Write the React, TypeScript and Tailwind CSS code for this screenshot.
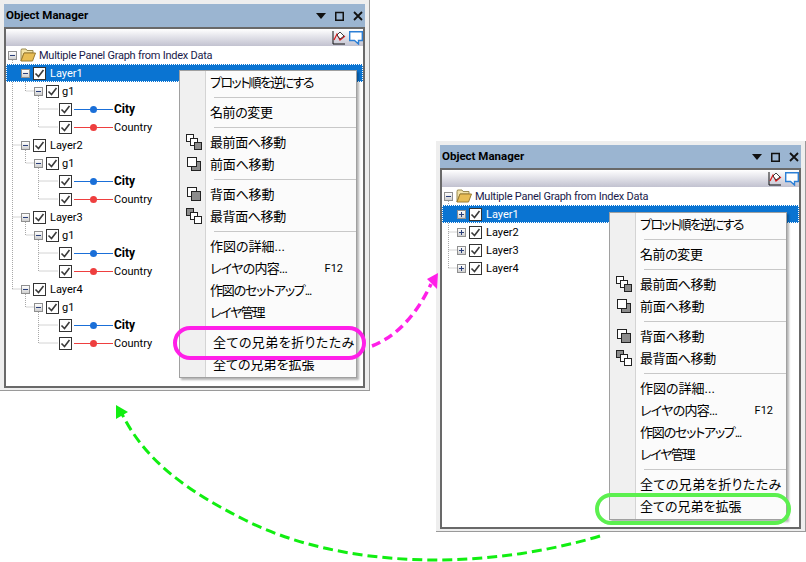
const UI_FONT = "font-['Roboto','Noto_Sans_CJK_JP',sans-serif]"

type MenuRow =
  | { sep: true }
  | { label: string; icon?: number; key?: string; nudge?: boolean; track?: string }

const menuRows = (nudge: boolean): MenuRow[] => [
  { label: "プロット順を逆にする", track: "tracking-[-1.6px]" },
  { sep: true },
  { label: "名前の変更", track: "tracking-[-0.4px]" },
  { sep: true },
  { label: "最前面へ移動", icon: 0, track: "tracking-[-0.4px]" },
  { label: "前面へ移動", icon: 1, track: "tracking-[-0.2px]" },
  { sep: true },
  { label: "背面へ移動", icon: 2, track: "tracking-[-0.2px]" },
  { label: "最背面へ移動", icon: 3, track: "tracking-[-0.4px]" },
  { sep: true },
  { label: "作図の詳細..." },
  { label: "レイヤの内容...", key: "F12", track: "tracking-[-0.7px]" },
  { label: "作図のセットアップ...", track: "tracking-[-1.2px]" },
  { label: "レイヤ管理", track: "tracking-[-1.3px]" },
  { sep: true },
  { label: "全ての兄弟を折りたたみ", nudge, track: "tracking-[0.45px]" },
  { label: "全ての兄弟を拡張", nudge },
]

function StackIcon({ kind }: { kind: number }) {
  if (kind === 0 || kind === 3) {
    return (
      <svg width="16" height="16" viewBox="0 0 16 16">
        <rect x="0.5" y="0.5" width="7" height="7" fill={kind === 3 ? "#8c8c8c" : "#fff"} stroke="#222" />
        <rect x="4.5" y="4.5" width="7" height="7" fill="#fff" stroke="#222" />
        <rect x="8.5" y="8.5" width="7" height="7" fill={kind === 0 ? "#8c8c8c" : "#fff"} stroke="#222" />
      </svg>
    )
  }
  return (
    <svg width="16" height="16" viewBox="0 0 16 16">
      {kind === 1 ? (
        <>
          <rect x="5.5" y="5.5" width="9" height="9" fill="#8c8c8c" stroke="#222" />
          <rect x="1.5" y="1.5" width="9" height="9" fill="#fff" stroke="#222" />
        </>
      ) : (
        <>
          <rect x="1.5" y="1.5" width="9" height="9" fill="#fff" stroke="#222" />
          <rect x="5.5" y="5.5" width="9" height="9" fill="#8c8c8c" stroke="#222" />
        </>
      )}
    </svg>
  )
}

function ContextMenu({ className, nudge }: { className: string; nudge: boolean }) {
  return (
    <div className={`absolute w-[178px] h-[308px] bg-[#fbfbfb] border border-[#a0a0a0] shadow-[2px_2px_2px_rgba(0,0,0,0.3)] ${className}`}>
      <div className="absolute left-0 top-0 bottom-0 w-[26px] bg-[#f0f0f0] border-r border-[#d4d4d4]" />
      <div className="relative flex flex-col text-[13px] leading-none text-black [font-feature-settings:'palt']">
        {menuRows(nudge).map((r, i) =>
          "sep" in r ? (
            <div key={i} className="h-[8px] flex items-center pl-[34px]">
              <div className="h-px w-full bg-[#c8c8c8]" />
            </div>
          ) : (
            <div key={i} className="h-[22px] flex items-center">
              <div className="w-[26px] flex justify-center pl-[1px] shrink-0">
                {r.icon !== undefined && <StackIcon kind={r.icon} />}
              </div>
              <span className={`whitespace-nowrap ${r.nudge ? "pl-[7px]" : "pl-[4px]"} ${r.track ?? ""}`}>{r.label}</span>
              {r.key && <span className="ml-auto pr-[13px] text-[11px]">{r.key}</span>}
            </div>
          )
        )}
      </div>
    </div>
  )
}

function ExpandBox({ plus }: { plus?: boolean }) {
  return (
    <span className="relative w-[7px] h-[7px] shrink-0 border border-[#8f8f8f] bg-gradient-to-b from-white to-[#d0d0d0] box-content flex items-center justify-center">
      <span className="absolute w-[5px] h-px bg-[#2a3f7a]" />
      {plus && <span className="absolute w-px h-[5px] bg-[#2a3f7a]" />}
    </span>
  )
}

function Check() {
  return (
    <span className="w-[11px] h-[11px] shrink-0 box-content border border-[#333] bg-white flex items-center justify-center">
      <svg width="11" height="11" viewBox="0 0 11 11">
        <path d="M1.5 5.5 L4.5 8.5 L9.5 2" fill="none" stroke="#3a3a3a" strokeWidth="1.6" />
      </svg>
    </span>
  )
}

function Folder() {
  return (
    <svg width="16" height="14" viewBox="0 0 16 14" className="shrink-0">
      <path d="M1 2.5 L1.5 1 H6 L7 2.5 H13 V5 H4 L1 13 Z" fill="#f3e3a8" stroke="#9a8a50" />
      <path d="M1 13 L4 5 H15.5 L12.5 13 Z" fill="#e8bd55" stroke="#9a7a30" />
    </svg>
  )
}

function Series({ color, label, bold }: { color: string; label: string; bold?: boolean }) {
  return (
    <div className="h-[18px] flex items-center pl-[53px]">
      <Check />
      <span className="relative w-[39px] h-px ml-[2px] shrink-0 flex items-center justify-center" style={{ background: color }}>
        <span className="w-[7px] h-[7px] rounded-full shrink-0" style={{ background: color }} />
      </span>
      <span className={`ml-[1px] ${bold ? "font-bold text-[12px]" : "text-[11px]"}`}>{label}</span>
    </div>
  )
}

function LayerRow({ name, plus, selected }: { name: string; plus?: boolean; selected?: boolean }) {
  return (
    <div className={`h-[18px] flex items-center pl-[15px] ${selected ? "bg-[#0a74d2] text-white outline-1 outline-dotted outline-white -outline-offset-1" : ""}`}>
      <ExpandBox plus={plus} />
      <span className="ml-[3px]"><Check /></span>
      <span className="ml-[4px] text-[11px]">{name}</span>
    </div>
  )
}

function Group() {
  return (
    <>
      <div className="h-[18px] flex items-center pl-[28px]">
        <ExpandBox />
        <span className="ml-[3px]"><Check /></span>
        <span className="ml-[3px] text-[11px]">g1</span>
      </div>
      <Series color="#1a6fd8" label="City" bold />
      <Series color="#ee3f3f" label="Country" />
    </>
  )
}

function TreeLines({ expanded }: { expanded: boolean }) {
  const rows = (n: number) => 9 + 18 * n
  let d = ""
  if (expanded) {
    d += `M6.5 14V${rows(13)}`
    for (const l of [1, 5, 9, 13]) {
      d += `M6.5 ${rows(l)}H15M19.5 ${rows(l) + 5}V${rows(l + 1)}H28`
      d += `M32.5 ${rows(l + 1) + 5}V${rows(l + 3)}H52M32.5 ${rows(l + 2)}H52`
    }
  } else {
    d += `M6.5 14V${rows(4)}`
    for (const l of [1, 2, 3, 4]) d += `M6.5 ${rows(l)}H15`
  }
  return (
    <svg className="absolute left-0 top-0 pointer-events-none" width="80" height="340">
      <path d={d} fill="none" stroke="#a8a8a8" strokeDasharray="1 1" />
    </svg>
  )
}

function ToolIcons() {
  return (
    <div className="ml-auto flex items-center gap-[3px]">
      <svg width="14" height="14" viewBox="0 0 14 14">
        <path d="M1 0V13H13" fill="none" stroke="#111" />
        <path d="M2 9 L5 3 L8 9 L13 5" fill="none" stroke="#e01818" strokeWidth="1.2" />
        <path d="M5 4 L8 1 L12 5 L8 8 Z" fill="#fff" stroke="#111" strokeWidth="0.8" />
      </svg>
      <svg width="14" height="14" viewBox="0 0 14 14">
        <path d="M0.7 0.7H13.3V9.5H9.5V13L5.5 9.5H0.7Z" fill="#fff" stroke="#2b7fd6" strokeWidth="1.4" />
      </svg>
    </div>
  )
}

function ManagerWindow({ className, expanded, menuClass, nudge }: { className: string; expanded: boolean; menuClass: string; nudge: boolean }) {
  return (
    <div className={`absolute w-[370px] bg-[#eeeeee] border-r border-b border-[#9a9a9a] pt-[4px] px-[4px] pb-[2px] flex flex-col ${className}`}>
      <div className="h-[23px] bg-[#9bb5d1] flex items-center pl-[2px] pr-[2px] shrink-0">
        <span className="text-[11.5px] font-bold text-black pt-[1px]">Object Manager</span>
        <div className="ml-auto flex items-center gap-[9px]">
          <svg width="10" height="6" viewBox="0 0 10 6"><path d="M0 0H10L5 6Z" fill="#111" /></svg>
          <svg width="9" height="10" viewBox="0 0 9 10"><path d="M0.75 1.5H8.25V9.25H0.75Z" fill="none" stroke="#111" strokeWidth="1.5" /></svg>
          <svg width="10" height="10" viewBox="0 0 10 10"><path d="M1 1L9 9M9 1L1 9" stroke="#111" strokeWidth="1.8" /></svg>
        </div>
      </div>
      <div className="flex-1 border-2 border-[#696969] flex flex-col">
        <div className="h-[17px] bg-gradient-to-b from-white to-[#c2c2d0] flex items-center shrink-0">
          <ToolIcons />
        </div>
        <div className={`relative bg-white h-[340px] text-[12px] leading-none text-black ${UI_FONT}`}>
          <TreeLines expanded={expanded} />
          <div className="relative flex flex-col">
            <div className="h-[18px] flex items-center pl-[2px]">
              <ExpandBox />
              <span className="ml-[3px]"><Folder /></span>
              <span className="ml-[3px] whitespace-nowrap text-[11px] tracking-[-0.25px] text-[#1a1a4a]">Multiple Panel Graph from Index Data</span>
            </div>
            {expanded ? (
              ["Layer1", "Layer2", "Layer3", "Layer4"].map((n, i) => (
                <div key={n}>
                  <LayerRow name={n} selected={i === 0} />
                  <Group />
                </div>
              ))
            ) : (
              ["Layer1", "Layer2", "Layer3", "Layer4"].map((n, i) => (
                <LayerRow key={n} name={n} plus selected={i === 0} />
              ))
            )}
          </div>
          <ContextMenu className={menuClass} nudge={nudge} />
        </div>
      </div>
    </div>
  )
}

export default function App() {
  return (
    <div className={`relative w-[806px] h-[562px] overflow-hidden bg-white ${UI_FONT}`}>
      <ManagerWindow className="left-0 top-0" expanded menuClass="left-[173px] top-[24px]" nudge />
      <ManagerWindow className="left-[436px] top-[141px]" expanded={false} menuClass="left-[167px] top-[25px]" nudge={false} />

      {/* callouts drawn over both windows */}
      <svg className="absolute left-0 top-0 pointer-events-none" width="806" height="562" viewBox="0 0 806 562">
        <rect x="175" y="328" width="189" height="30" rx="15" fill="none" stroke="#ff1fe8" strokeWidth="4" />
        <path d="M372 346 C398 336 418 312 431 284" fill="none" stroke="#ff1fe8" strokeWidth="3.5" strokeDasharray="9 5" />
        <path d="M438 273 L427 279 L437 289 Z" fill="#ff1fe8" />
        <rect x="597" y="495" width="192" height="28" rx="14" fill="none" stroke="#5cf04f" strokeWidth="4" />
        <path d="M600 536 C480 572 340 568 245 520 C185 490 145 460 122 414" fill="none" stroke="#11ee11" strokeWidth="3" strokeDasharray="10 5" />
        <path d="M116 405 L116 419 L128 412 Z" fill="#11ee11" />
      </svg>
    </div>
  )
}
